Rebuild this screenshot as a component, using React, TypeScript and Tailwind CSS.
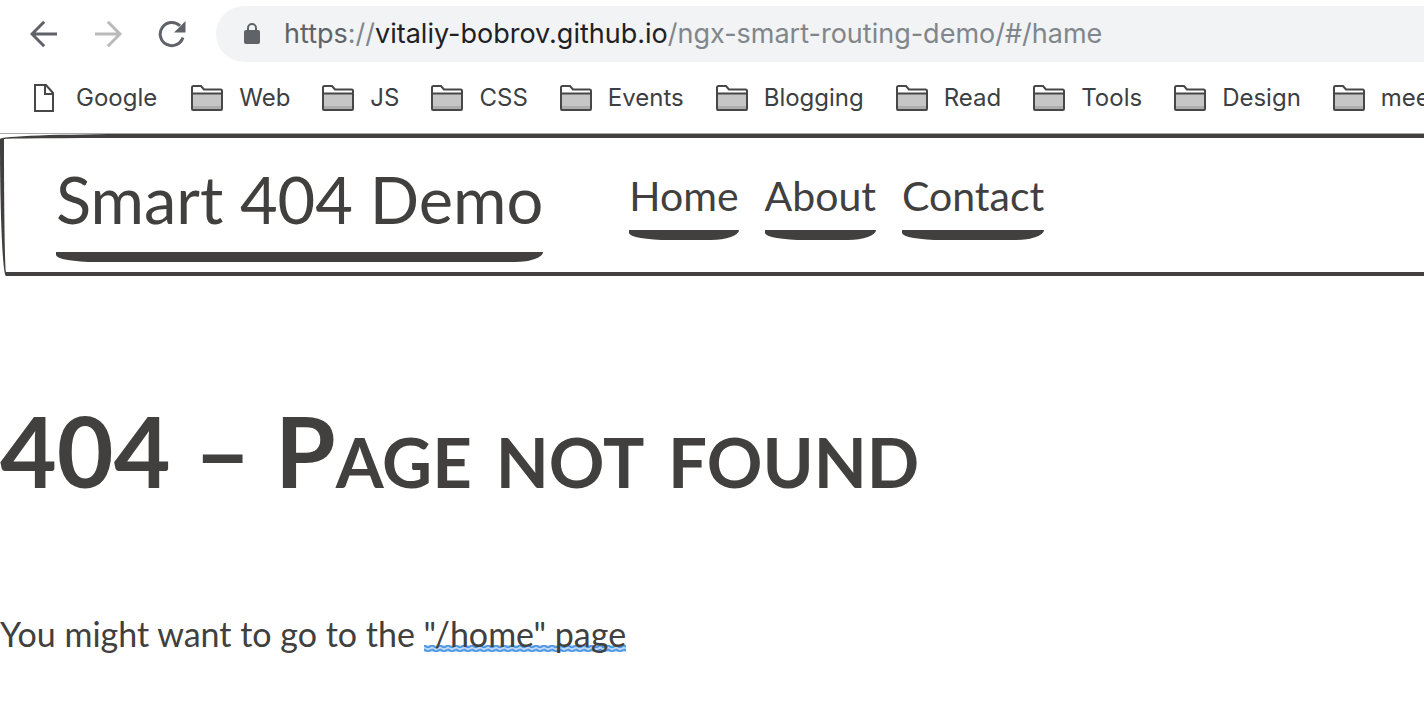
const folders = ['Web', 'JS', 'CSS', 'Events', 'Blogging', 'Read', 'Tools', 'Design', 'mee'];

const navLinks = ['Home', 'About', 'Contact'];

function BackIcon() {
  return (
    <svg width="28" height="28" viewBox="0 0 28 28" fill="none" stroke="currentColor" strokeWidth="3" aria-hidden="true">
      <path d="M27 14H3M14.2 1.8 2 14l12.2 12.2" />
    </svg>
  );
}

function ReloadIcon() {
  return (
    <svg width="28" height="28" viewBox="0 0 28 28" aria-hidden="true">
      <path d="M24.9 17.5A11.6 11.6 0 1 1 22 5.8" fill="none" stroke="currentColor" strokeWidth="3" />
      <path d="M27.5 1v11.5H16Z" fill="currentColor" />
    </svg>
  );
}

function LockIcon() {
  return (
    <svg width="16" height="22" viewBox="0 0 16 22" aria-hidden="true">
      <rect y="7" width="16" height="14" rx="2" fill="currentColor" />
      <path d="M4 8V5a4 4 0 0 1 8 0v3" fill="none" stroke="currentColor" strokeWidth="2" />
    </svg>
  );
}

function PageIcon() {
  return (
    <svg className="shrink-0" width="20" height="28" viewBox="0 0 20 28" fill="none" stroke="#474747" strokeWidth="2" aria-hidden="true">
      <path d="M1 1h11l7 8v18H1ZM11 1v9h8" />
    </svg>
  );
}

function FolderIcon() {
  return (
    <svg className="shrink-0" width="32" height="26" viewBox="0 0 32 26" aria-hidden="true">
      <path d="M1 24V2.500Q1 1 2.500 1H10l3 3.500h16.500Q31 4.500 31 6v18q0 1-1 1H2q-1 0-1-1Z" fill="#fff" stroke="#474747" strokeWidth="2" />
      <path d="M2 9h28v15H2Z" fill="#c6c6c6" />
      <path d="M2 21h28v3H2Z" fill="#adadad" />
      <path d="M1 8.500h30" stroke="#474747" strokeWidth="2" />
    </svg>
  );
}

function DoubleWave() {
  return (
    <svg className="absolute bottom-2 left-0 -z-10 h-[7px] w-full" aria-hidden="true">
      <defs>
        <pattern id="double-wave" width="8" height="7" patternUnits="userSpaceOnUse">
          <rect width="8" height="7" fill="#b9d8f7" />
          <path d="M-2 1Q0 0 2 1.500T6 1.500T10 1.500M-2 5Q0 4 2 5.500T6 5.500T10 5.500" fill="none" stroke="#4a93e0" strokeWidth="1.600" />
        </pattern>
      </defs>
      <rect width="100%" height="7" fill="url(#double-wave)" />
    </svg>
  );
}

function BrowserBar() {
  return (
    <div className="overflow-hidden border-b border-[#a9a9a9] font-['Inter',sans-serif]">
      <div className="flex items-center pt-[6px]">
        <div className="flex shrink-0 items-center gap-9 px-[30px] text-[#5f6368]">
          <button type="button" aria-label="Back"><BackIcon /></button>
          <button type="button" aria-label="Forward" className="rotate-180 text-[#bababa]"><BackIcon /></button>
          <button type="button" aria-label="Reload"><ReloadIcon /></button>
        </div>
        <div className="flex h-14 min-w-0 grow items-center gap-6 rounded-l-full bg-[#f1f3f4] pl-7 text-[#5f6368]">
          <LockIcon />
          <p className="text-[27px] whitespace-nowrap text-[#80868b]">
            <span className="text-[#5f6368]">https</span>://<span className="text-[#202124]">vitaliy-bobrov.github.io</span>/ngx-smart-routing-demo/#/hame
          </p>
        </div>
      </div>
      <nav aria-label="Bookmarks" className="flex h-[71px] items-center gap-8 pl-[34px] text-2xl whitespace-nowrap text-[#3c4043]">
        <a href="#google" className="flex items-center gap-[22px] pr-0.5"><PageIcon />Google</a>
        {folders.map((name) => (
          <button type="button" key={name} className="flex shrink-0 items-center gap-4"><FolderIcon />{name}</button>
        ))}
      </nav>
    </div>
  );
}

const underline =
  "after:block after:h-[10px] after:rounded-bl-[40px_7px] after:rounded-br-[28px_10px] after:bg-[#41403e] after:content-['']";

export default function App() {
  return (
    <div className="min-h-screen overflow-hidden bg-white font-['Lato',sans-serif] text-[#41403e]">
      <BrowserBar />
      <header className="flex items-start rounded-tl-[134px_5px] rounded-bl-[6px_134px] border-4 border-r-0 border-[#41403e] pb-[10px] pl-[52px]">
        <a href="#/" className={`pt-2 text-[65px] leading-[106px] whitespace-nowrap ${underline}`}>Smart 404 Demo</a>
        <nav aria-label="Main" className="ml-[86px] flex gap-[26px] pt-6">
          {navLinks.map((name) => (
            <a key={name} href={`#/${name.toLowerCase()}`} className={`text-[41px] leading-[68px] ${underline}`}>{name}</a>
          ))}
        </nav>
      </header>
      <main>
        <h1 className="pt-[102px] text-[98px] leading-[144px] font-bold whitespace-nowrap [font-variant-caps:small-caps]">404 – Page not found</h1>
        <p className="pt-[86px] text-[34px] leading-[52px] whitespace-nowrap">
          You might want to go to the{' '}
          <a href="#/home" className="relative isolate inline-block"><DoubleWave />"/home" page</a>
        </p>
      </main>
    </div>
  );
}
